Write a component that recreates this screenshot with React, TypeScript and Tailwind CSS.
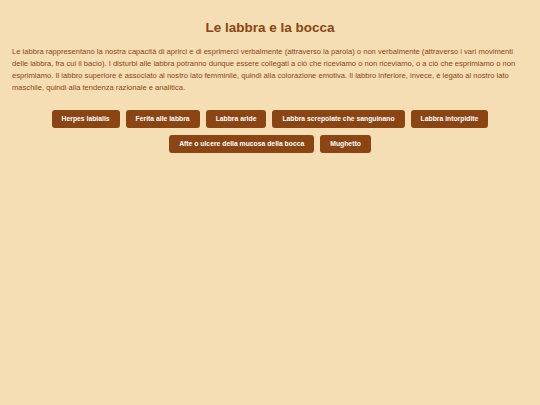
const disturbi = [
  "Herpes labialis",
  "Ferita alle labbra",
  "Labbra aride",
  "Labbra screpolate che sanguinano",
  "Labbra intorpidite",
  "Afte o ulcere della mucosa della bocca",
  "Mughetto",
];

export default function App() {
  return (
    <div className="min-h-[405px] bg-[#f5deb3] px-[12px] pt-[18px] font-['Liberation_Sans',Arial,sans-serif] text-[#8b4513]">
      <h1 className="text-center text-[13.5px] font-bold leading-[20px]">Le labbra e la bocca</h1>
      <p className="mt-[8px] text-[7.6px] leading-[12px]">
        Le labbra rappresentano la nostra capacità di aprirci e di esprimerci verbalmente (attraverso la parola) o non
        verbalmente (attraverso i vari movimenti delle labbra, fra cui il bacio). I disturbi alle labbra potranno dunque
        essere collegati a ciò che riceviamo o non riceviamo, o a ciò che esprimiamo o non esprimiamo. Il labbro superiore
        è associato al nostro lato femminile, quindi alla colorazione emotiva. Il labbro inferiore, invece, è legato al
        nostro lato maschile, quindi alla tendenza razionale e analitica.
      </p>
      <div className="mt-[16px] flex flex-wrap justify-center gap-x-[6px] gap-y-[7px]">
        {disturbi.map((d) => (
          <button
            key={d}
            className="h-[18px] rounded-[3px] bg-[#8b4513] px-[10px] text-[6.8px] font-bold text-white"
          >
            {d}
          </button>
        ))}
      </div>
    </div>
  );
}
